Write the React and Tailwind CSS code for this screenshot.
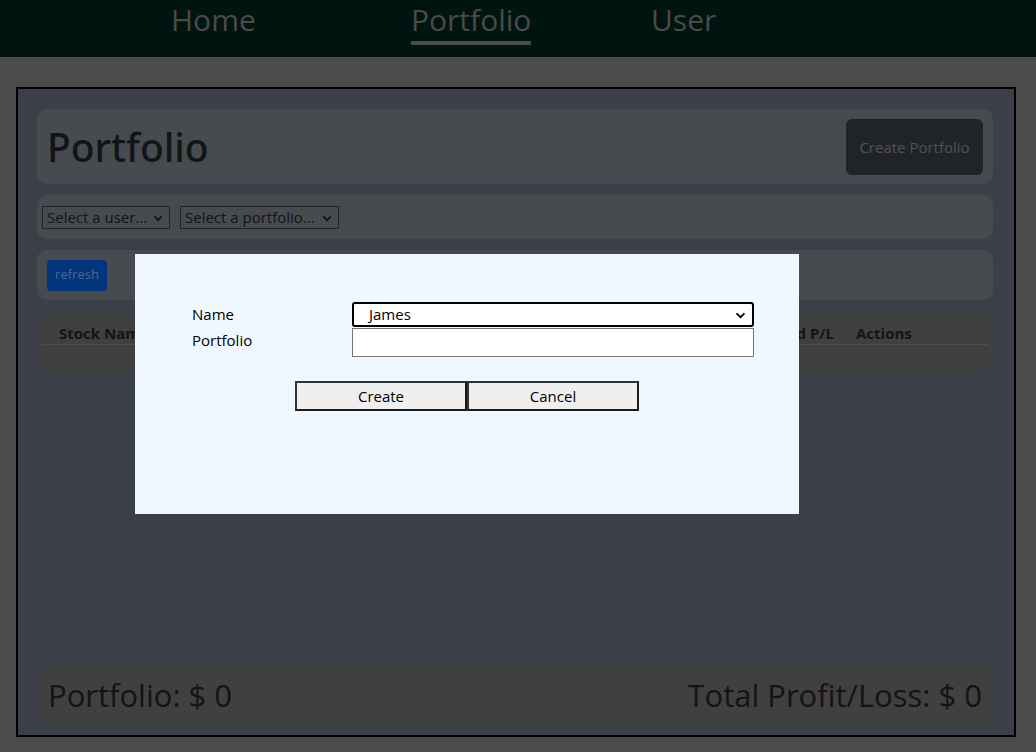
import React from "react";

const font = { fontFamily: '"Open Sans", "Noto Sans", sans-serif' };

function Chevron({ className }) {
  return (
    <svg viewBox="0 0 12 8" className={className} fill="none" stroke="currentColor" strokeWidth="2.2">
      <path d="M1.5 1.5 L6 6 L10.5 1.5" />
    </svg>
  );
}

function DimSelect({ label, width }) {
  return (
    <div
      className="relative flex items-center h-[23px] border border-[#222426] text-[15px] text-[#121416] pl-[4px]"
      style={{ width }}
    >
      <span className="leading-none">{label}</span>
      <Chevron className="absolute right-[6px] top-[8px] w-[10px] h-[7px] text-[#121416]" />
    </div>
  );
}

export default function App() {
  return (
    <div className="relative min-h-screen bg-[#4b4b4b]" style={font}>
      {/* nav */}
      <nav className="h-[57px] bg-[#001510] flex pl-[171px]">
        <a className="w-[240px] text-[30px] leading-[40px] text-[#4a4a4a]">Home</a>
        <div className="w-[240px]">
          <a className="inline-block text-[30px] leading-[40px] text-[#4a4a4a] border-b-4 border-[#4b4b4b] pb-[1px]">
            Portfolio
          </a>
        </div>
        <a className="w-[240px] text-[30px] leading-[40px] text-[#4a4a4a]">User</a>
      </nav>

      {/* main box */}
      <div className="pt-[30px] pl-[16px] pr-[20px] pb-[15px]">
        <div className="h-[650px] border-2 border-black bg-[#3b3f48] pt-[20px] pl-[19px] pr-[21px] pb-[12px] flex flex-col">
          {/* header */}
          <div className="h-[75px] rounded-[10px] bg-[#474b4f] flex items-start justify-between pl-[10px] pr-[10px] pt-[10px]">
            <h1 className="font-['Noto_Sans',sans-serif] text-[39px] leading-[52px] font-medium text-[#121416] mt-[2px]">
              Portfolio
            </h1>
            <button className="w-[137px] h-[56px] rounded-[6px] bg-[#212427] text-[15px] text-[#4e5358]">
              Create Portfolio
            </button>
          </div>

          {/* selects */}
          <div className="mt-[11px] h-[44px] rounded-[10px] bg-[#474b4f] flex items-center gap-[10px] pl-[5px]">
            <DimSelect label="Select a user..." width={128} />
            <DimSelect label="Select a portfolio..." width={159} />
          </div>

          {/* refresh */}
          <div className="mt-[11px] h-[50px] rounded-[10px] bg-[#474b4f] flex items-center pl-[10px]">
            <button className="w-[60px] h-[31px] rounded-[4px] bg-[#02347c] text-[13px] text-[#4a6c92]">
              refresh
            </button>
          </div>

          {/* table */}
          <div className="mt-[13px] h-[58px] rounded-[10px] bg-[#404040] px-[5px] pt-[9px]">
            <div className="flex h-[23px] items-center border-b border-[#4e4e4e] text-[15px] font-bold text-[#121416]">
              <div className="w-[200px] pl-[17px]">Stock Name</div>
              <div className="flex-1" />
              <div className="w-[150px] text-right">Unrealized P/L</div>
              <div className="w-[154px] pl-[22px]">Actions</div>
            </div>
          </div>

          <div className="flex-1" />

          {/* footer */}
          <div className="h-[56px] bg-[#404040] flex items-center justify-between px-[11px] text-[31px] font-medium text-[#121416]">
            <span>Portfolio: $ 0</span>
            <span>Total Profit/Loss: $ 0</span>
          </div>
        </div>
      </div>

      {/* modal */}
      <div className="absolute left-[135px] top-[254px] w-[664px] h-[260px] bg-[#f0f8ff] pt-[48px] text-black text-[15px]">
        <div className="flex pl-[57px]">
          <div className="w-[160px] leading-[25px]">Name</div>
          <div className="relative w-[402px] h-[25px] border-2 border-black rounded-[3px] bg-white pl-[15px] leading-[21px]">
            James
            <Chevron className="absolute right-[6px] top-[8px] w-[11px] h-[7px] text-black" />
          </div>
        </div>
        <div className="flex pl-[57px] mt-[1px]">
          <div className="w-[160px] leading-[25px]">Portfolio</div>
          <input className="w-[402px] h-[29px] border border-[#767676] bg-white" />
        </div>
        <div className="flex justify-center mt-[24px]">
          <button className="w-[172px] h-[30px] bg-[#efefef] border-2 border-[#1b1b1b] border-t-[#333] border-l-[#333] text-[15px]">
            Create
          </button>
          <button className="w-[172px] h-[30px] bg-[#efefef] border-2 border-[#1b1b1b] border-t-[#333] border-l-[#333] text-[15px]">
            Cancel
          </button>
        </div>
      </div>
    </div>
  );
}
